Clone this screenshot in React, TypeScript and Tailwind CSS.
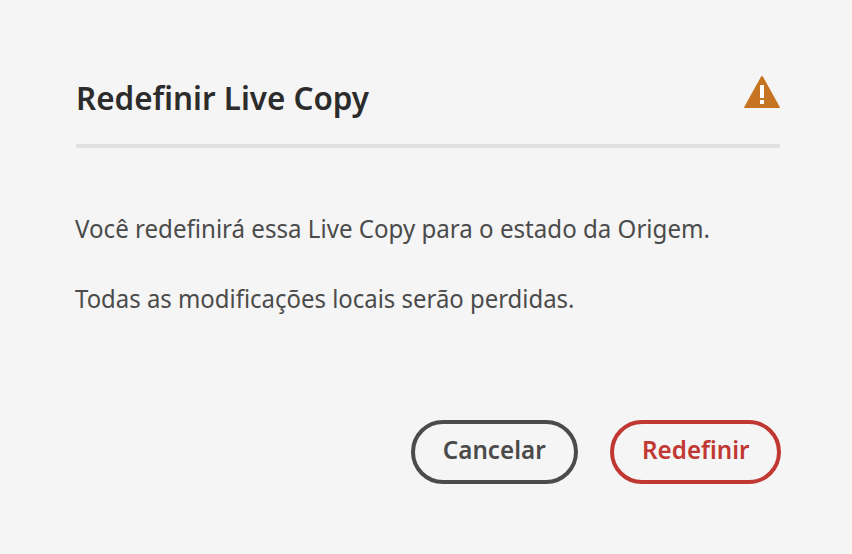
export default function App() {
  return (
    <main className="flex h-[554px] w-[852px] flex-col bg-[#f5f5f5] pt-[72px] pr-[71px] pl-[76px] font-['Noto_Sans',sans-serif]">
      <header className="mr-px flex h-[76px] items-start justify-between border-b-4 border-[#e1e1e1]">
        <h1 className="origin-left scale-x-[0.951] text-[33px] leading-[52px] font-semibold whitespace-nowrap text-[#2c2c2c]">
          Redefinir Live Copy
        </h1>
        <svg className="mt-1 h-8 w-9" viewBox="0 0 36 32" role="img" aria-label="Aviso">
          <path
            d="M17.1 0.6a1 1 0 0 1 1.8 0L35.8 31a.7.7 0 0 1-.6 1H.8a.7.7 0 0 1-.6-1Z"
            fill="#c67422"
          />
          <path d="M16 9h4v13h-4zM16 24h4v4h-4z" fill="#fff" />
        </svg>
      </header>
      <section className="-ml-px flex flex-col items-start gap-[30px] pt-[60px] text-[26px] leading-10 font-normal whitespace-nowrap text-[#4b4b4b]">
        <p className="origin-left scale-x-[0.927]">
          Você redefinirá essa Live Copy para o estado da Origem.
        </p>
        <p className="origin-left scale-x-[0.92]">Todas as modificações locais serão perdidas.</p>
      </section>
      <footer className="mt-[102px] flex justify-end gap-8 text-[26px] font-semibold">
        <button className="flex h-16 w-[167px] items-center justify-center rounded-full border-4 border-[#4b4b4b] pb-1.5 text-[#4b4b4b]">
          <span className="scale-x-[0.93]">Cancelar</span>
        </button>
        <button className="flex h-16 w-[171px] items-center justify-center rounded-full border-4 border-[#c13832] pb-1.5 text-[#c13832]">
          <span className="scale-x-[0.93]">Redefinir</span>
        </button>
      </footer>
    </main>
  );
}
